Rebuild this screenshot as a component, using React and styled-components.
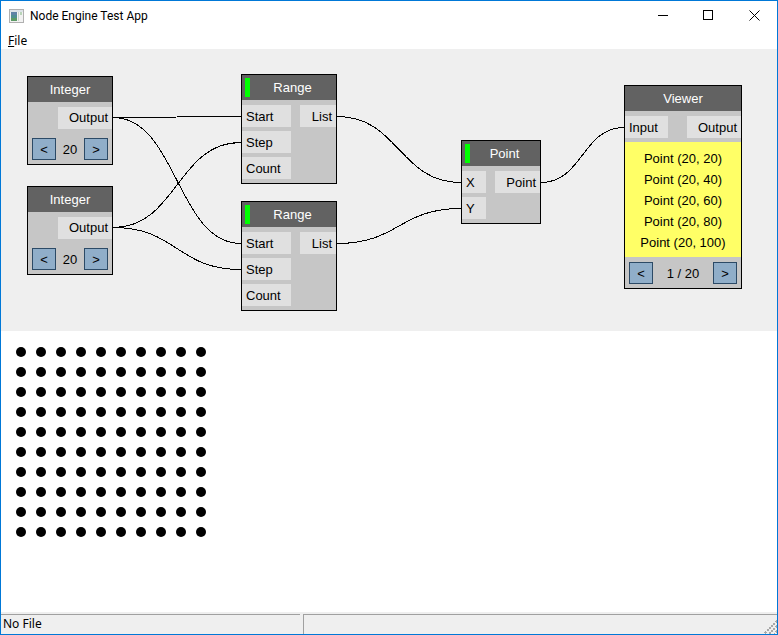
import React from "react";
import styled, { createGlobalStyle } from "styled-components";

const Global = createGlobalStyle`
  html, body { margin: 0; padding: 0; background: #fff; }
  #root { width: 778px; height: 635px; }
`;

const Window = styled.div`
  box-sizing: border-box;
  width: 778px;
  height: 635px;
  border: 1px solid #0078d7;
  background: #fff;
  display: flex;
  flex-direction: column;
  font-family: "Liberation Sans", Arial, sans-serif;
  color: #000;
  overflow: hidden;
`;

const TitleBar = styled.div`
  height: 29px;
  flex: none;
  display: flex;
  align-items: center;
  padding-left: 8px;
  font-family: Roboto, "Noto Sans", sans-serif;
  font-size: 12px;
`;

const TitleText = styled.span`
  margin-left: 6px;
  padding-top: 1px;
`;

const Spacer = styled.div`
  flex: 1;
`;

const CaptionButton = styled.div`
  width: ${(p) => p.$w}px;
  height: 29px;
  box-sizing: border-box;
  padding-top: 9px;
  display: flex;
  align-items: flex-start;
  justify-content: center;
`;

const MenuBar = styled.div`
  height: 19px;
  flex: none;
  display: flex;
  align-items: center;
  padding: 1px 0 0 7px;
  box-sizing: border-box;
  font-family: "Noto Sans", "Open Sans", sans-serif;
  font-size: 12px;
`;

const MenuKey = styled.span`
  text-decoration: underline;
`;

const Canvas = styled.div`
  position: relative;
  height: 282px;
  flex: none;
  background: #efefef;
`;

const Wires = styled.svg`
  position: absolute;
  left: 0;
  top: 0;
`;

const Node = styled.div`
  position: absolute;
  box-sizing: border-box;
  left: ${(p) => p.$x}px;
  top: ${(p) => p.$y}px;
  width: ${(p) => p.$w}px;
  height: ${(p) => p.$h}px;
  border: 1px solid #000;
  background: #c6c6c6;
  display: flex;
  flex-direction: column;
  font-size: 13px;
`;

const Header = styled.div`
  position: relative;
  box-sizing: border-box;
  height: 25px;
  flex: none;
  background: #626262;
  color: #fff;
  display: flex;
  align-items: center;
  justify-content: center;
  padding-left: ${(p) => (p.$led ? 7 : 0)}px;
  font-size: 13px;
`;

const Led = styled.div`
  position: absolute;
  left: 3px;
  top: 3px;
  width: 5px;
  height: 19px;
  background: #00ff00;
`;

const Slots = styled.div`
  display: flex;
  justify-content: space-between;
  padding-top: 5px;
`;

const SlotColumn = styled.div`
  display: flex;
  flex-direction: column;
  gap: 4px;
`;

const Slot = styled.div`
  box-sizing: border-box;
  width: ${(p) => p.$w}px;
  height: 22px;
  background: #e0e0e0;
  display: flex;
  align-items: center;
  justify-content: ${(p) => (p.$out ? "flex-end" : "flex-start")};
  padding: 0 4px ${(p) => (p.$lift ? 2 : 0)}px;
`;

const Pager = styled.div`
  display: flex;
  align-items: center;
  justify-content: space-between;
  padding: 0 4px;
  margin-top: ${(p) => p.$top}px;
`;

const PagerButton = styled.div`
  box-sizing: border-box;
  width: 24px;
  height: 22px;
  background: #90aec9;
  border: 1px solid #2c4a66;
  display: flex;
  align-items: center;
  justify-content: center;
`;

const ViewerList = styled.div`
  height: 115px;
  margin-top: 4px;
  background: #ffff66;
  box-sizing: border-box;
  padding-top: 6px;
  display: flex;
  flex-direction: column;
  align-items: center;
`;

const ViewerRow = styled.div`
  height: 21px;
  line-height: 21px;
`;

const Drawing = styled.div`
  flex: 1;
  padding: 16px 0 0 15px;
  display: grid;
  grid-template-columns: repeat(10, 10px);
  grid-auto-rows: 10px;
  gap: 10px;
  align-content: start;
`;

const Dot = styled.div`
  width: 10px;
  height: 10px;
  border-radius: 50%;
  background: #000;
`;

const StatusBar = styled.div`
  height: 22px;
  flex: none;
  background: #efefef;
  display: flex;
  padding-top: 2px;
  box-sizing: border-box;
  font-family: "Noto Sans", "Open Sans", sans-serif;
  font-size: 12px;
  position: relative;
`;

const StatusCell = styled.div`
  box-sizing: border-box;
  width: ${(p) => (p.$grow ? "auto" : "299px")};
  flex: ${(p) => (p.$grow ? 1 : "none")};
  margin-left: ${(p) => (p.$grow ? 3 : 0)}px;
  border-top: 1px solid #a0a0a0;
  border-left: ${(p) => (p.$grow ? "1px solid #a0a0a0" : "none")};
  padding: 0 0 2px 2px;
  display: flex;
  align-items: center;
  height: 20px;
`;

const Grip = styled.svg`
  position: absolute;
  right: 0;
  bottom: 0;
`;

const IntegerNode = ({ x, y }) => (
  <Node $x={x} $y={y} $w={86} $h={89}>
    <Header>Integer</Header>
    <Slots>
      <div />
      <Slot $w={54} $out $lift>Output</Slot>
    </Slots>
    <Pager $top={9}>
      <PagerButton>&lt;</PagerButton>
      <span>20</span>
      <PagerButton>&gt;</PagerButton>
    </Pager>
  </Node>
);

const RangeNode = ({ x, y }) => (
  <Node $x={x} $y={y} $w={96} $h={110}>
    <Header $led>
      <Led />
      Range
    </Header>
    <Slots>
      <SlotColumn>
        <Slot $w={49}>Start</Slot>
        <Slot $w={49}>Step</Slot>
        <Slot $w={49}>Count</Slot>
      </SlotColumn>
      <SlotColumn>
        <Slot $w={36} $out>List</Slot>
      </SlotColumn>
    </Slots>
  </Node>
);

const wire = (a, b, c, d) => {
  const m = (a + c) / 2;
  return `M${a} ${b}C${m} ${b} ${m} ${d} ${c} ${d}`;
};

// coordinates are relative to the canvas, which starts at page y = 49
const wires = [
  [113, 68.5, 241, 67.5],
  [113, 68.5, 241, 194.5],
  [113, 178.5, 241, 93.5],
  [113, 178.5, 241, 220.5],
  [337, 67.5, 461, 133.5],
  [337, 194.5, 461, 159.5],
  [541, 133.5, 624, 78.5],
];

const points = [20, 40, 60, 80, 100];

export default function App() {
  return (
    <Window>
      <Global />
      <TitleBar>
        <svg width="15" height="14" viewBox="0 0 15 14">
          <rect x="0.5" y="0.5" width="14" height="13" fill="#f2f2f2" stroke="#b0b0b0" />
          <rect x="1" y="1" width="13" height="2" fill="#dde3e8" />
          <rect x="2" y="3" width="6" height="9" fill="#4f8f92" />
          <rect x="2" y="3" width="6" height="3" fill="#5f83a6" />
          <rect x="2" y="9" width="6" height="3" fill="#5c9a66" />
          <rect x="9" y="3" width="1" height="9" fill="#c9d6c9" />
          <rect x="11" y="3" width="2" height="3" fill="#b9d4b9" />
        </svg>
        <TitleText>Node Engine Test App</TitleText>
        <Spacer />
        <CaptionButton $w={42}>
          <svg width="10" height="10"><rect x="0" y="5" width="10" height="1" fill="#000" /></svg>
        </CaptionButton>
        <CaptionButton $w={48}>
          <svg width="10" height="10"><rect x="0.5" y="0.5" width="9" height="9" fill="none" stroke="#000" /></svg>
        </CaptionButton>
        <CaptionButton $w={45}>
          <svg width="11" height="11"><path d="M0.5 0.5L10.5 10.5M10.5 0.5L0.5 10.5" stroke="#000" fill="none" /></svg>
        </CaptionButton>
      </TitleBar>
      <MenuBar>
        <span><MenuKey>F</MenuKey>ile</span>
      </MenuBar>
      <Canvas>
        <Wires width="776" height="282" viewBox="1 0 776 282" shapeRendering="crispEdges">
          {wires.map((w, i) => (
            <path key={i} d={wire(...w)} fill="none" stroke="#000" strokeWidth="1" />
          ))}
        </Wires>
        <IntegerNode x={26} y={27} />
        <IntegerNode x={26} y={137} />
        <RangeNode x={240} y={25} />
        <RangeNode x={240} y={152} />
        <Node $x={460} $y={91} $w={80} $h={84}>
          <Header $led>
            <Led />
            Point
          </Header>
          <Slots>
            <SlotColumn>
              <Slot $w={24}>X</Slot>
              <Slot $w={24}>Y</Slot>
            </SlotColumn>
            <SlotColumn>
              <Slot $w={45} $out>Point</Slot>
            </SlotColumn>
          </Slots>
        </Node>
        <Node $x={623} $y={36} $w={118} $h={204}>
          <Header>Viewer</Header>
          <Slots>
            <Slot $w={43}>Input</Slot>
            <Slot $w={54} $out>Output</Slot>
          </Slots>
          <ViewerList>
            {points.map((p) => (
              <ViewerRow key={p}>Point (20, {p})</ViewerRow>
            ))}
          </ViewerList>
          <Pager $top={5}>
            <PagerButton>&lt;</PagerButton>
            <span>1 / 20</span>
            <PagerButton>&gt;</PagerButton>
          </Pager>
        </Node>
      </Canvas>
      <Drawing>
        {Array.from({ length: 100 }, (_, i) => <Dot key={i} />)}
      </Drawing>
      <StatusBar>
        <StatusCell>No File</StatusCell>
        <StatusCell $grow />
        <Grip width="14" height="14" viewBox="0 0 14 14" shapeRendering="crispEdges">
          <path d="M14 1L1 14M14 6L6 14M14 11L11 14" stroke="#a8a8a8" strokeWidth="2" strokeDasharray="2 1" fill="none" />
        </Grip>
      </StatusBar>
    </Window>
  );
}
